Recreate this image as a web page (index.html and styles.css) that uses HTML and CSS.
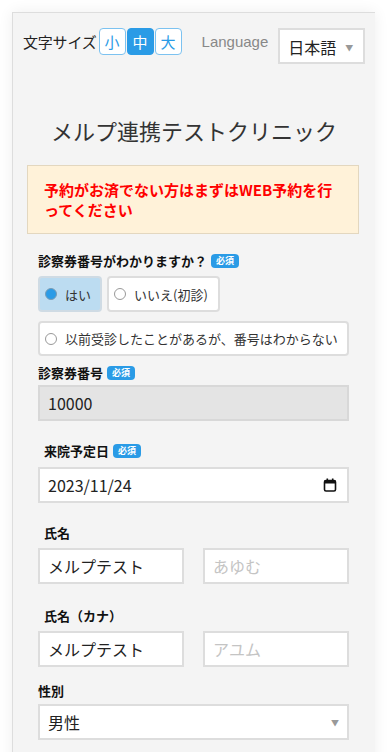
FILE: index.html
```html
<!DOCTYPE html>
<html lang="ja">
<head>
    <meta charset="UTF-8">
    <meta name="viewport" content="width=device-width, initial-scale=1.0">
    <title>メルプ連携テストクリニック</title>
    <link rel="stylesheet" href="styles.css">
</head>
<body>
    <div class="panel">
        <div class="topbar">
            <div class="fontsize">
                <span class="fontsize-label">文字サイズ</span>
                <span class="size-btn">小</span>
                <span class="size-btn active">中</span>
                <span class="size-btn">大</span>
            </div>
            <span class="lang-label">Language</span>
            <div class="select lang-select">
                <span>日本語</span>
                <span class="arrow">▼</span>
            </div>
        </div>

        <h1 class="title">メルプ連携テストクリニック</h1>

        <div class="alert">予約がお済でない方はまずはWEB予約を行ってください</div>

        <div class="form">
            <div class="label first">診察券番号がわかりますか？<span class="badge">必須</span></div>
            <div class="radio-row">
                <div class="radio checked"><span class="dot"></span>はい</div>
                <div class="radio no"><span class="dot"></span>いいえ(初診)</div>
            </div>
            <div class="radio wide"><span class="dot"></span>以前受診したことがあるが、番号はわからない</div>

            <div class="label l-card">診察券番号<span class="badge">必須</span></div>
            <div class="input disabled">10000</div>

            <div class="label indent l-date">来院予定日<span class="badge">必須</span></div>
            <div class="input date">
                <span>2023/11/24</span>
                <svg width="14" height="14" viewBox="0 0 14 14">
                    <rect x="1.5" y="2.5" width="11" height="10.5" rx="1.5" fill="none" stroke="#111" stroke-width="1.6"/>
                    <rect x="1.5" y="2.5" width="11" height="3" fill="#111"/>
                    <rect x="3.5" y="0.5" width="1.6" height="3" fill="#111"/>
                    <rect x="8.9" y="0.5" width="1.6" height="3" fill="#111"/>
                </svg>
            </div>

            <div class="label indent l-name">氏名</div>
            <div class="pair">
                <div class="input">メルプテスト</div>
                <div class="input placeholder">あゆむ</div>
            </div>

            <div class="label indent l-kana">氏名（カナ）</div>
            <div class="pair">
                <div class="input">メルプテスト</div>
                <div class="input placeholder">アユム</div>
            </div>

            <div class="label l-sex">性別</div>
            <div class="select sex-select">
                <span>男性</span>
                <span class="arrow">▼</span>
            </div>
        </div>
    </div>
</body>
</html>
```
FILE: styles.css
```css
* {
    margin: 0;
    padding: 0;
    box-sizing: border-box;
}

body {
    font-family: 'Noto Sans CJK JP', 'Noto Sans', sans-serif;
    background: #fff;
    color: #222;
    overflow: hidden;
}

.panel {
    margin: 12px 0 0 12px;
    width: 363px;
    min-height: 760px;
    background: #f4f4f4;
    border-top: 1px solid #ddd;
    border-left: 1px solid #ddd;
    box-shadow: 0 0 14px rgba(0,0,0,0.07);
    padding: 0 10px;
}

.topbar {
    display: flex;
    align-items: flex-start;
    padding-top: 15px;
    white-space: nowrap;
}

.fontsize {
    display: flex;
    align-items: center;
    gap: 1px;
    height: 27px;
    flex-shrink: 0;
}

.fontsize-label {
    font-size: 15px;
    margin-right: 1px;
    letter-spacing: -0.2px;
}

.size-btn {
    width: 27px;
    height: 27px;
    border: 1px solid #7cc2f0;
    border-radius: 4px;
    background: #fff;
    color: #2a9be6;
    font-size: 15px;
    display: flex;
    align-items: center;
    justify-content: center;
}

.size-btn.active {
    background: #2a9be6;
    border-color: #2a9be6;
    color: #fff;
}

.lang-label {
    font-family: 'Liberation Sans', Arial, sans-serif;
    color: #888;
    font-size: 15px;
    margin-left: 20px;
    line-height: 27px;
    flex-shrink: 0;
}

.select {
    background: #fff;
    border: 2px solid #ddd;
    display: flex;
    align-items: center;
    justify-content: space-between;
    font-size: 16px;
    padding: 0 8px 0 8px;
}

.arrow {
    color: #999;
    font-size: 8px;
}

.lang-select {
    margin-left: 10px;
    width: 87px;
    height: 36px;
    padding-top: 2px;
    padding-right: 10px;
    flex-shrink: 0;
}

.title {
    font-size: 22px;
    font-weight: normal;
    color: #333;
    text-align: center;
    margin-top: 51px;
    line-height: 30px;
}

.alert {
    margin: 20px 0 0 4px;
    width: 332px;
    background: #fff2d9;
    border: 1px solid #e3d7bf;
    color: #f00;
    font-weight: bold;
    font-size: 15px;
    line-height: 20px;
    padding: 14px 16px 13px;
}

.form {
    padding: 0 16px 0 15px;
}

.label {
    font-size: 13px;
    font-weight: bold;
    line-height: 20px;
    display: flex;
    align-items: center;
    color: #111;
}

.label.indent {
    padding-left: 6px;
}

.badge {
    background: #2a9be6;
    color: #fff;
    font-size: 9px;
    border-radius: 4px;
    padding: 0 5px;
    line-height: 14px;
    margin-left: 4px;
}

.label.first { margin-top: 17px; }
.l-card { margin-top: 7px; }
.l-date { margin-top: 20px; }
.l-name { margin-top: 20px; }
.l-kana { margin-top: 22px; }
.l-sex { margin-top: 14px; }

.radio-row {
    display: flex;
    gap: 5px;
    margin-top: 5px;
}

.radio {
    height: 36px;
    border: 2px solid #ddd;
    border-radius: 4px;
    background: #fff;
    display: flex;
    align-items: center;
    padding: 0 5px;
    font-size: 13px;
    color: #333;
    white-space: nowrap;
}

.radio.checked {
    background: #bcdcf1;
    border-color: #cfdbe4;
    width: 64px;
}

.radio.no {
    width: 113px;
}

.radio.wide {
    margin-top: 9px;
    width: 311px;
    height: 35px;
}

.dot {
    width: 12px;
    height: 12px;
    border-radius: 50%;
    border: 1px solid #999;
    background: #fff;
    margin-right: 8px;
    flex-shrink: 0;
}

.radio.checked .dot {
    background: #2a9be6;
    border-color: #7a9cb4;
}

.input {
    height: 36px;
    background: #fff;
    border: 2px solid #ddd;
    font-size: 16px;
    display: flex;
    align-items: center;
    padding: 0 8px;
    color: #222;
    margin-top: 2px;
}

.input.disabled {
    background: #e4e4e4;
    border-color: #d8d8d8;
}

.input.date {
    margin-top: 6px;
    justify-content: space-between;
    padding-right: 10px;
}

.pair {
    display: flex;
    gap: 19px;
    margin-top: 5px;
}

.pair .input {
    margin-top: 0;
    width: 147px;
}

.input.placeholder {
    color: #c4c4c4;
}

.sex-select {
    margin-top: 3px;
    height: 36px;
    padding-right: 8px;
}
```
